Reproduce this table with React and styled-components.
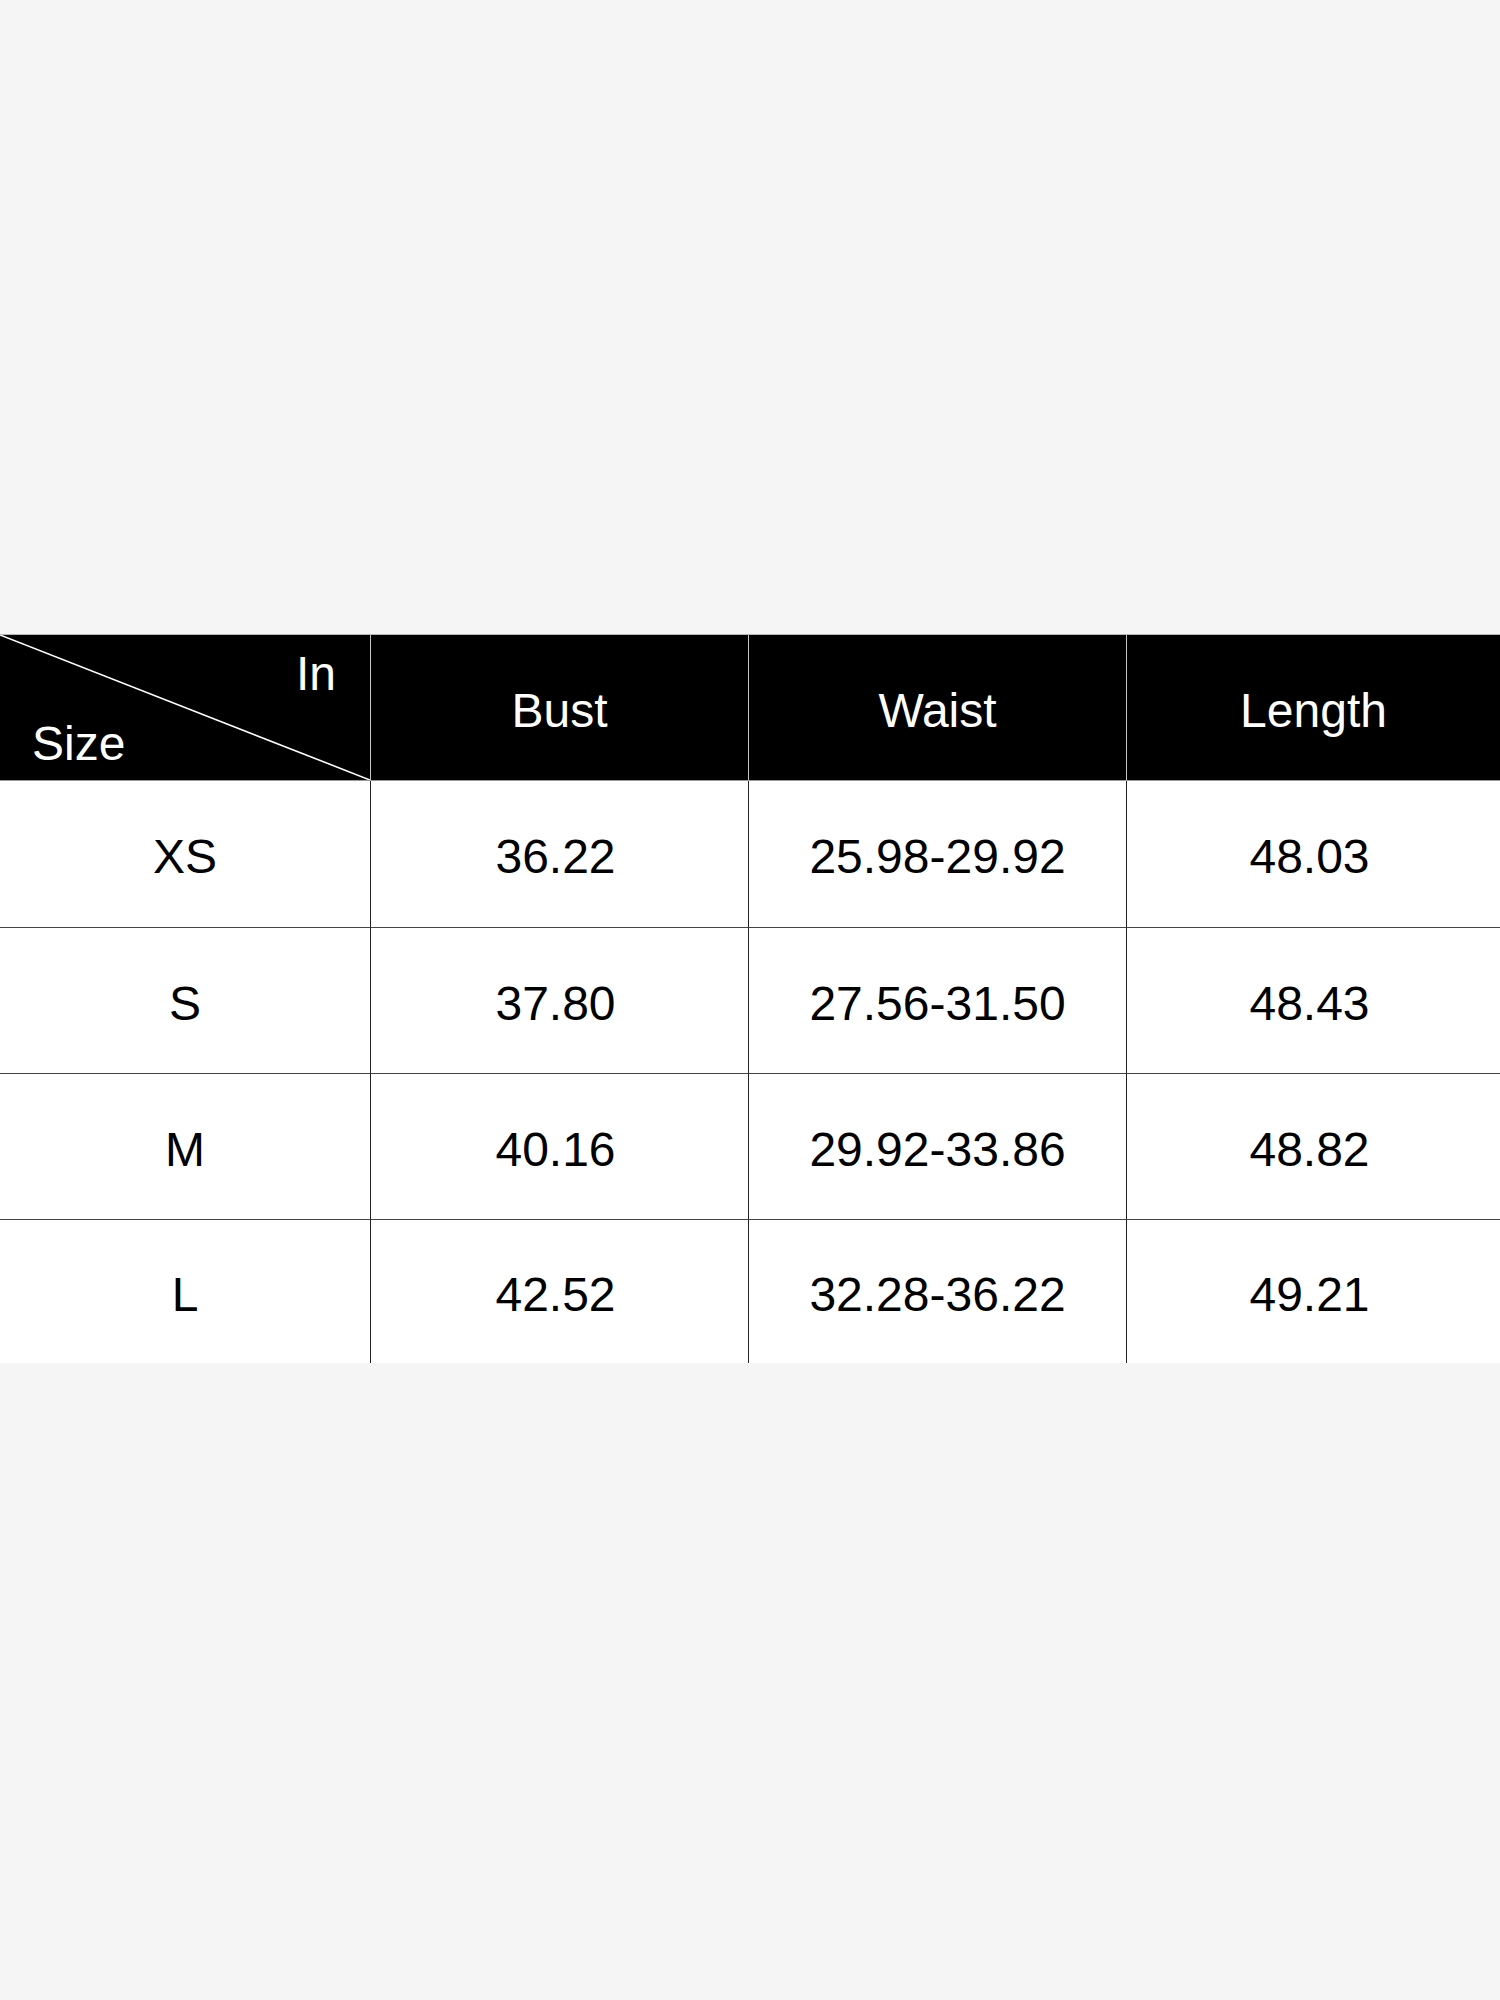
import React from 'react';
import styled, { createGlobalStyle } from 'styled-components';

const GlobalStyle = createGlobalStyle`
  html, body {
    margin: 0;
    padding: 0;
    background: #f5f5f5;
  }
  body {
    font-family: "Liberation Sans", Arial, sans-serif;
  }
`;

const Page = styled.div`
  min-height: 2000px;
  padding-top: 634px;
  box-sizing: border-box;
`;

const Table = styled.div`
  display: grid;
  grid-template-columns: 371px 378px 378px 1fr;
  grid-template-rows: 146px 147px 146px 146px 143px;
  background: #fff;
  border-top: 1px solid #b5b5b5;
`;

const HeadCell = styled.div`
  position: relative;
  display: flex;
  align-items: center;
  justify-content: center;
  padding-top: 6px;
  box-sizing: border-box;
  background: #000;
  color: #fff;
  font-size: 48px;
  line-height: 1;
  border-bottom: 1px solid #9a9a9a;
  border-right: ${p => (p.$last ? 'none' : '1px solid #c4c4c4')};
`;

const Cell = styled.div`
  display: flex;
  align-items: center;
  justify-content: center;
  padding-top: 6px;
  padding-right: ${p => (p.$shift ? '8px' : '0')};
  box-sizing: border-box;
  color: #000;
  font-size: 48px;
  line-height: 1;
  border-bottom: ${p => (p.$bottom ? 'none' : '1px solid #444')};
  border-right: ${p => (p.$last ? 'none' : '1px solid #222')};
`;

const Diagonal = styled.svg`
  position: absolute;
  inset: 0;
  width: 100%;
  height: 100%;
`;

const CornerLabel = styled.span`
  position: absolute;
  font-size: 48px;
  line-height: 1;
  color: #fff;
  ${p => (p.$top ? 'top: 15px; right: 34px;' : 'bottom: 12px; left: 32px;')}
`;

const columns = ['Bust', 'Waist', 'Length'];

const rows = [
  ['XS', '36.22', '25.98-29.92', '48.03'],
  ['S', '37.80', '27.56-31.50', '48.43'],
  ['M', '40.16', '29.92-33.86', '48.82'],
  ['L', '42.52', '32.28-36.22', '49.21'],
];

const App = () => {
  return (
    <>
      <GlobalStyle />
      <Page>
        <Table>
          <HeadCell>
            <Diagonal viewBox="0 0 370 145" preserveAspectRatio="none">
              <line x1="0" y1="0" x2="370" y2="145" stroke="#fff" strokeWidth="1.6" />
            </Diagonal>
            <CornerLabel $top>In</CornerLabel>
            <CornerLabel>Size</CornerLabel>
          </HeadCell>
          {columns.map((c, i) => (
            <HeadCell key={c} $last={i === columns.length - 1}>{c}</HeadCell>
          ))}
          {rows.map((r, ri) =>
            r.map((v, ci) => (
              <Cell
                key={`${ri}-${ci}`}
                $last={ci === r.length - 1}
                $bottom={ri === rows.length - 1}
                $shift={ci === 1 || ci === 3}
              >
                {v}
              </Cell>
            ))
          )}
        </Table>
      </Page>
    </>
  );
};

export default App;
